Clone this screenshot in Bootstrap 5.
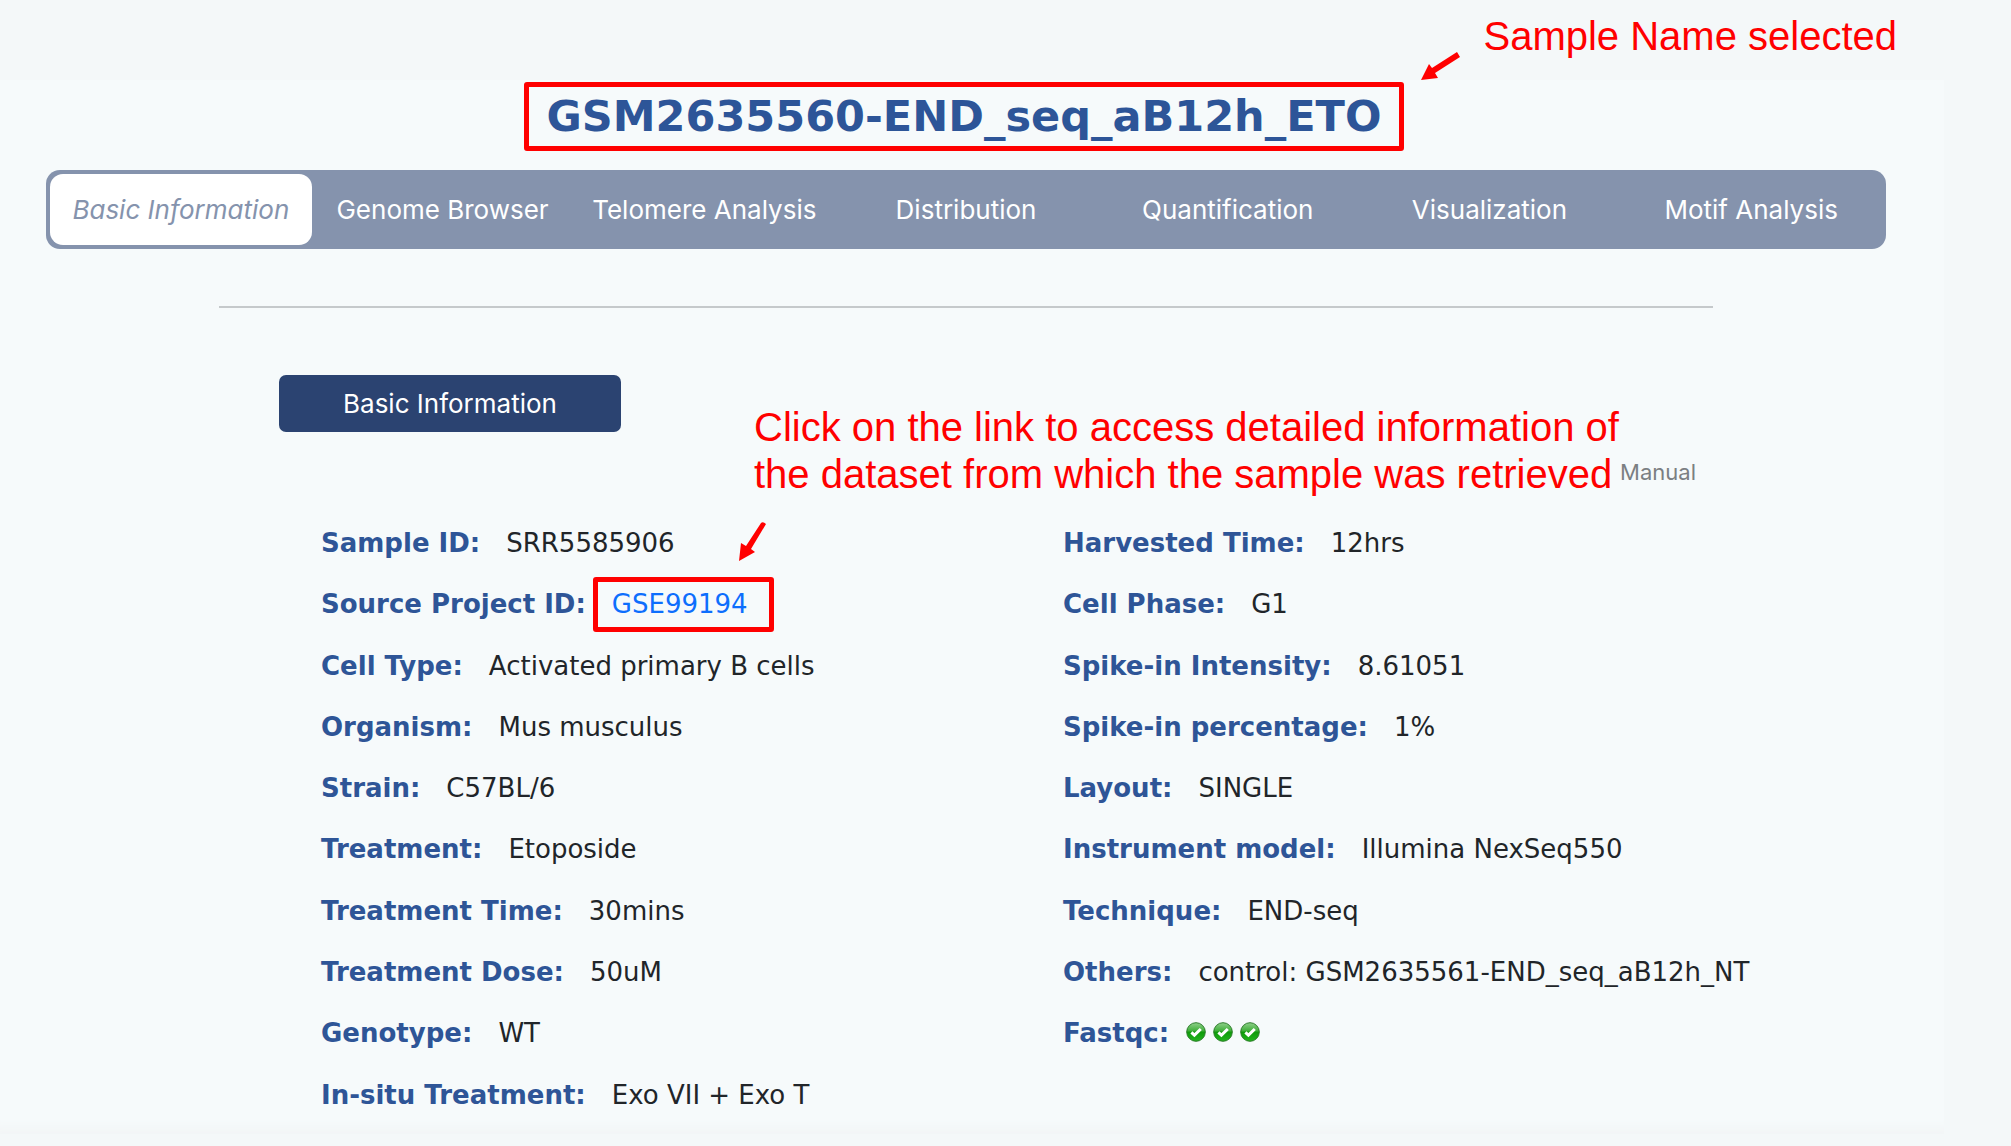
<!DOCTYPE html>
<html lang="en">
<head>
<meta charset="utf-8">
<meta name="viewport" content="width=device-width, initial-scale=1">
<title>GSM2635560-END_seq_aB12h_ETO</title>
<link href="https://cdn.jsdelivr.net/npm/bootstrap@5.3.0/dist/css/bootstrap.min.css" rel="stylesheet">
<style>
  body { background: #f4f8f9; color: #212529; font-family: Verdana, "DejaVu Sans", sans-serif; overflow-x: hidden; }
  .page-wrap { padding: 80px 67px 10px 0; }
  .panel { background: #f6fafb; padding: 2px 58px 8px 46px; box-shadow: inset 0 -14px 10px -8px #f2f5f6; }
  .sample-title { font-family: "DejaVu Sans", sans-serif; font-weight: 700; font-size: 43px; line-height: 59px; color: #2d5598; border: 5px solid #f00; border-radius: 3px; padding: 0 18px; margin: 0 4px 19px 0; white-space: nowrap; }
  .note-text { font-family: "Liberation Sans", Arial, sans-serif; font-weight: 400; font-size: 40px; line-height: 47px; color: #f00; white-space: nowrap; }
  .note-title { left: 100%; bottom: 100%; margin: 0 0 27px 84px; }
  .arrow-title { left: 100%; bottom: 100%; margin: 0 0 5px 21px; }
  .note-link { left: 535px; top: 29px; }
  .arrow-link { right: -20px; bottom: 100%; margin-bottom: 12px; }
  .sample-tabs { background: #8593ad; border-radius: 14px; padding: 4px; }
  .sample-tabs .nav-link { font-family: Inter, sans-serif; font-size: 26px; line-height: 39px; color: #fff; padding: 16px 0; border-radius: 13px; white-space: nowrap; }
  .sample-tabs .nav-link.active { background: #fff; color: #8593ad; font-style: italic; }
  .rule { height: 2px; background: #c5c9cb; opacity: 1; border: 0; margin: 57px 173px 67px; }
  .info-section { margin: 0 173px; }
  .section-btn { background: #2b4371; color: #fff; font-family: Inter, sans-serif; font-size: 26px; line-height: 39px; border: 0; border-radius: 7px; padding: 9px 0; width: 342px; margin-left: 60px; }
  .section-btn:hover { background: #2b4371; color: #fff; }
  .manual-link { font-family: Inter, sans-serif; font-size: 22px; line-height: 32px; color: #7b7f82; margin: 24px 17px 25px 0; }
  .details { font-family: "DejaVu Sans", sans-serif; font-size: 26px; line-height: 61px; margin: 0 81px 0 275px; white-space: nowrap; }
  .details dl { display: grid; grid-template-rows: repeat(10, 1fr); min-height: 613px; }
  .details dt { color: #2e5597; }
  .details dd { margin: 0 0 0 26px; }
  .project-link { color: #0d6efd; }
  .project-mark { left: -19px; right: -26px; top: 3px; height: 55px; border: 5px solid #f00; border-radius: 3px; pointer-events: none; }
  .details dd.checks { margin-left: 17px; padding-bottom: 4px; gap: 7px; }
</style>
</head>
<body>
<div class="page-wrap">
  <main class="panel">
    <div class="d-flex justify-content-center">
      <h1 class="sample-title position-relative">GSM2635560-END_seq_aB12h_ETO
        <span class="note-text note-title position-absolute">Sample Name selected</span>
        <svg class="arrow-title position-absolute" width="42" height="32" viewBox="0 0 42 32" fill="#f00" aria-hidden="true"><path d="M37 2 40 7 15 23 18 28 1 30 9 14 12 18z"/></svg>
      </h1>
    </div>
    <nav>
      <ul class="nav nav-justified flex-nowrap sample-tabs">
        <li class="nav-item"><a class="nav-link active" href="#basic" aria-current="page">Basic Information</a></li>
        <li class="nav-item"><a class="nav-link" href="#genome">Genome Browser</a></li>
        <li class="nav-item"><a class="nav-link" href="#telomere">Telomere Analysis</a></li>
        <li class="nav-item"><a class="nav-link" href="#distribution">Distribution</a></li>
        <li class="nav-item"><a class="nav-link" href="#quantification">Quantification</a></li>
        <li class="nav-item"><a class="nav-link" href="#visualization">Visualization</a></li>
        <li class="nav-item"><a class="nav-link" href="#motif">Motif Analysis</a></li>
      </ul>
    </nav>
    <hr class="rule">
    <section class="info-section position-relative" id="basic">
      <button type="button" class="btn section-btn d-block">Basic Information</button>
      <div class="d-flex justify-content-end">
        <a class="manual-link text-decoration-none" href="#manual">Manual</a>
      </div>
      <div class="note-text note-link position-absolute">Click on the link to access detailed information of<br>the dataset from which the sample was retrieved</div>
    </section>
    <div class="row g-0 details">
      <dl class="col-6 mb-0">
        <div class="d-flex"><dt>Sample ID:</dt><dd>SRR5585906</dd></div>
        <div class="d-flex"><dt>Source Project ID:</dt><dd class="position-relative"><a class="project-link text-decoration-none" href="#GSE99194">GSE99194</a><span class="project-mark position-absolute"></span>
          <svg class="arrow-link position-absolute" width="30" height="42" viewBox="0 0 30 42" fill="#f00" aria-hidden="true"><path d="M23 3Q25 1 28 4L13 29 17 32 1 41 3 23 8 26z"/></svg></dd></div>
        <div class="d-flex"><dt>Cell Type:</dt><dd>Activated primary B cells</dd></div>
        <div class="d-flex"><dt>Organism:</dt><dd>Mus musculus</dd></div>
        <div class="d-flex"><dt>Strain:</dt><dd>C57BL/6</dd></div>
        <div class="d-flex"><dt>Treatment:</dt><dd>Etoposide</dd></div>
        <div class="d-flex"><dt>Treatment Time:</dt><dd>30mins</dd></div>
        <div class="d-flex"><dt>Treatment Dose:</dt><dd>50uM</dd></div>
        <div class="d-flex"><dt>Genotype:</dt><dd>WT</dd></div>
        <div class="d-flex"><dt>In-situ Treatment:</dt><dd>Exo VII + Exo T</dd></div>
      </dl>
      <dl class="col-6 mb-0">
        <div class="d-flex"><dt>Harvested Time:</dt><dd>12hrs</dd></div>
        <div class="d-flex"><dt>Cell Phase:</dt><dd>G1</dd></div>
        <div class="d-flex"><dt>Spike-in Intensity:</dt><dd>8.61051</dd></div>
        <div class="d-flex"><dt>Spike-in percentage:</dt><dd>1%</dd></div>
        <div class="d-flex"><dt>Layout:</dt><dd>SINGLE</dd></div>
        <div class="d-flex"><dt>Instrument model:</dt><dd>Illumina NexSeq550</dd></div>
        <div class="d-flex"><dt>Technique:</dt><dd>END-seq</dd></div>
        <div class="d-flex"><dt>Others:</dt><dd>control: GSM2635561-END_seq_aB12h_NT</dd></div>
        <div class="d-flex"><dt>Fastqc:</dt><dd class="checks d-flex align-items-center">
          <svg width="20" height="20" viewBox="0 0 20 20" aria-hidden="true"><defs><linearGradient id="gloss" x1="0" y1="0" x2="0" y2="1"><stop offset="0" stop-color="#8fd08b"/><stop offset=".45" stop-color="#3eae38"/><stop offset=".5" stop-color="#0f9a0b"/><stop offset="1" stop-color="#22b51c"/></linearGradient><symbol id="tick" viewBox="0 0 20 20"><circle cx="10" cy="10" r="9.3" fill="url(#gloss)" stroke="#2c7d2a" stroke-width="1"/><path d="M5.4 10.4 8.4 13.2 14.8 7" fill="none" stroke="#fff" stroke-width="3"/></symbol></defs><use href="#tick"/></svg>
          <svg width="20" height="20" aria-hidden="true"><use href="#tick"/></svg>
          <svg width="20" height="20" aria-hidden="true"><use href="#tick"/></svg>
        </dd></div>
      </dl>
    </div>
  </main>
</div>
<script src="https://cdn.jsdelivr.net/npm/bootstrap@5.3.0/dist/js/bootstrap.bundle.min.js"></script>
</body>
</html>
